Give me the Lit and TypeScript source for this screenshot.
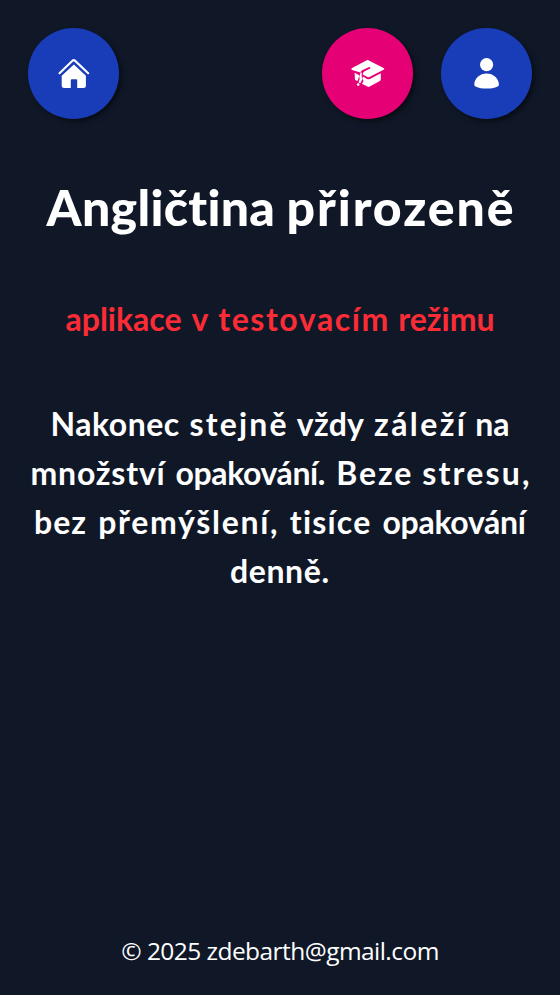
import { LitElement, html, css, svg } from "lit";
import { customElement, property } from "lit/decorators.js";
import { styleMap } from "lit/directives/style-map.js";

const icons: Record<string, unknown> = {
  home: svg`<path d="M2.5 16.2 15.7 3.6q1.1-1 2.2 0L31.2 16.2" fill="none" stroke="#fff" stroke-width="2.1" stroke-linecap="round" stroke-linejoin="round"/>
    <path d="M16.9 7.5 28.9 18.7V28.6q0 2.5-2.5 2.5H20.2V23.3q0-1-1-1H14.8q-1 0-1 1v7.8H7.2q-2.5 0-2.5-2.5V18.7Z"/>`,
  learn: svg`<path d="M15.8 3.2q.8-.4 1.6 0L32.5 11q1.5.9 0 1.8L18.4 20.1q-1 .5-2 0L11.8 17.5q-.4-2.1 1.8-3.3l5.2-2.4q1-.7.4-1.4-.6-.6-1.6-.1l-6 2.8q-2 1-2.2 2.5L1.1 12.9q-1.5-.9 0-1.8Z"/>
    <path d="M3.6 15.7 8.6 18.5 7.6 21.1 6.4 24 4.7 23.2q-.8-.5-.8-1.5ZM11.9 19.6l4.2 2.3q1.4.7 2.8 0L29.8 16.2v6.1q0 1.1-1 1.6l-10.1 5.7q-1.2.6-2.4 0L11 26.7l1.6-2.6-1.1-2.2Z"/>
    <path d="M9.5 15.5h1.2v4.2l.8 2-1 2.3-1.2 2.2-1.8-.8 1.2-3.6-.4-1.6Z"/><circle cx="7.2" cy="27.6" r="1.3"/>`,
  user: svg`<circle cx="16.6" cy="7.7" r="6.6"/><path d="M4.3 27.8C4.1 21.3 10 16.4 16.6 16.4s12.5 4.9 12.3 11.4q0 1.1-1.2 1.6C21.3 32.3 11.9 32.3 5.5 29.4q-1.2-.5-1.2-1.6Z"/>`,
};

@customElement("nav-button")
class NavButton extends LitElement {
  @property() icon = "home";
  @property() label = "";
  @property({ type: Boolean, reflect: true }) accent = false;

  static styles = css`
    :host { display: block; width: 91px; height: 91px; }
    .button {
      display: grid; place-items: center; width: 100%; height: 100%;
      border: 0; padding: 0; border-radius: 50%;
      background: #193cb8; box-shadow: 3px 3px 5px rgba(0, 0, 0, 0.5);
    }
    :host([accent]) .button { background: #e60076; }
    .icon { width: 34px; height: 34px; fill: #fff; display: block; }
  `;

  render() {
    return html`<button class="button" aria-label=${this.label}>
      <svg class="icon" viewBox="0 0 34 34">${icons[this.icon]}</svg>
    </button>`;
  }
}

/** A word and its tracking in pixels. */
type Word = [text: string, tracking: number];
interface Line { width: number; words: Word[] }

const title: Line = { width: 467, words: [["Angličtina", 0.3], ["přirozeně", 1.9]] };
const notice: Line = {
  width: 429,
  words: [["aplikace", 0], ["v", 0], ["testovacím", 1.6], ["režimu", 0]],
};
const intro: Line[] = [
  { width: 459, words: [["Nakonec", 0.5], ["stejně", 2.2], ["vždy", 0.2], ["záleží", 2.4], ["na", 0]] },
  { width: 499, words: [["množství", 0.8], ["opakování.", -0.4], ["Beze", 1.9], ["stresu,", 2.2]] },
  { width: 492, words: [["bez", 1], ["přemýšlení,", 1.7], ["tisíce", 1.2], ["opakování", -0.3]] },
  { width: 100, words: [["denně.", 0.6]] },
];

const renderLine = ({ width, words }: Line) => html`<span class="line" style=${styleMap({ width: `${width}px` })}>${words.map(
  ([text, tracking]) => html`<span style=${styleMap({ letterSpacing: `${tracking}px`, marginRight: `${-tracking}px` })}>${text}</span> `,
)}</span>`;

@customElement("app-root")
class AppRoot extends LitElement {
  static styles = css`
    :host {
      display: flex; flex-direction: column; box-sizing: border-box;
      height: 995px; padding: 28px; background: #101828; color: #fff;
      text-align: center; font-family: Lato, "Open Sans", sans-serif;
    }
    .nav { display: flex; gap: 28px; }
    .home { margin-right: auto; }
    h1, p { margin: 0; white-space: nowrap; }
    h1 { margin-top: 55px; font-size: 50px; line-height: 66px; font-weight: 900; }
    .notice { margin-top: 54px; font-size: 32px; line-height: 49px; font-weight: 700; color: #fb2c36; }
    .intro { margin-top: 56px; font-size: 32px; line-height: 49px; font-weight: 700; }
    .line { display: flex; justify-content: space-between; margin: 0 auto; }
    .footer {
      margin-top: auto; margin-bottom: -2px;
      font: 24.5px/36px "Open Sans", "Noto Sans", sans-serif; letter-spacing: -0.55px;
    }
  `;

  render() {
    return html`
      <nav class="nav">
        <nav-button class="home" icon="home" label="Domů"></nav-button>
        <nav-button icon="learn" label="Výuka" accent></nav-button>
        <nav-button icon="user" label="Profil"></nav-button>
      </nav>
      <h1>${renderLine(title)}</h1>
      <p class="notice">${renderLine(notice)}</p>
      <p class="intro">${intro.map(renderLine)}</p>
      <footer class="footer">© 2025 zdebarth@gmail.com</footer>
    `;
  }
}
